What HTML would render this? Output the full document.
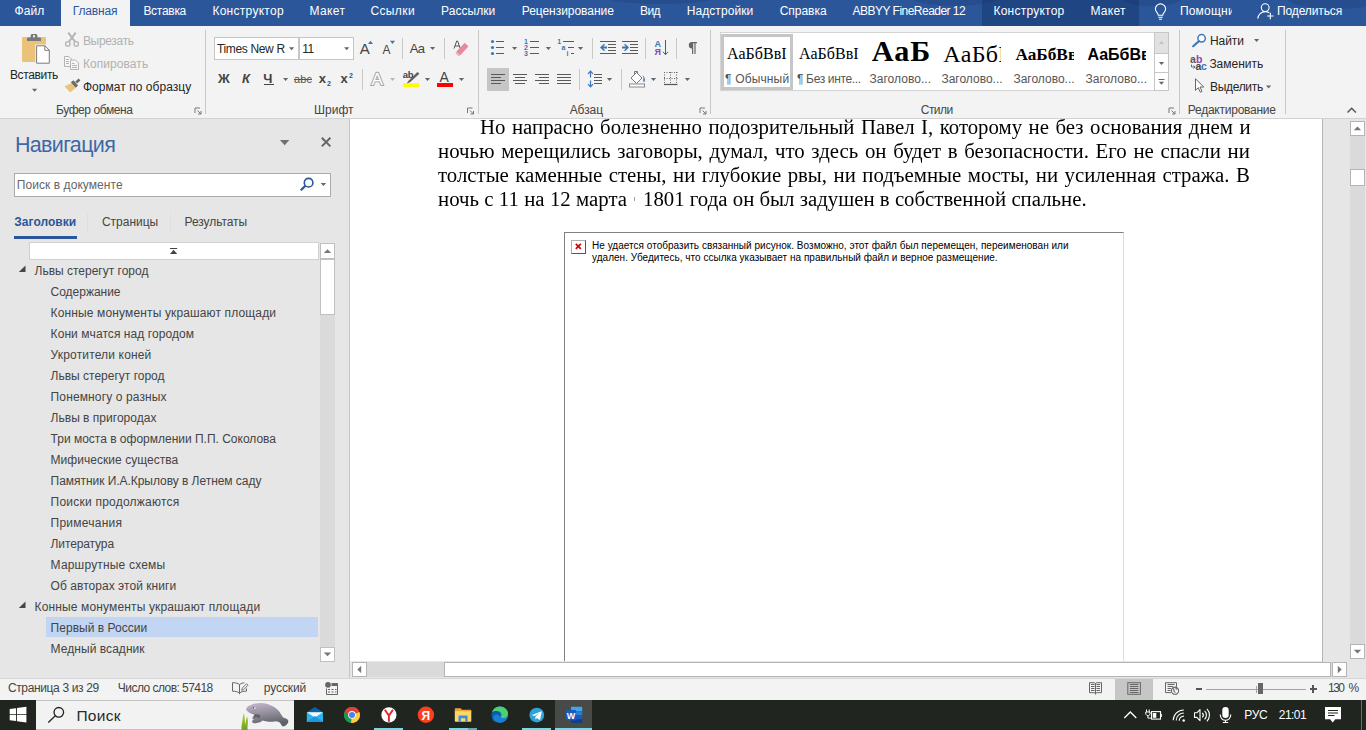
<!DOCTYPE html>
<html lang="ru">
<head>
<meta charset="utf-8">
<title>Документ — Word</title>
<style>
html,body{margin:0;padding:0;}
body{width:1366px;height:730px;overflow:hidden;position:relative;background:#e6e6e6;font-family:"Liberation Sans",sans-serif;font-size:12px;color:#444;}
.abs,.t,.ic{position:absolute;}
.t{white-space:nowrap;line-height:1;}
.ic{left:0;top:0;width:1366px;height:730px;overflow:visible;pointer-events:none;}
section,header,nav,main,footer{position:absolute;left:0;top:0;width:1366px;height:0;}
#tabs .bar{left:0;top:0;width:1366px;height:26px;background:#2b579a;}
#tabs .ctx{left:982px;top:0;width:157px;height:26px;background:#1f4582;}
#tabs .act{left:61px;top:0;width:69px;height:26px;background:#f3f3f3;}
#ribbon .bg{left:0;top:26px;width:1366px;height:92px;background:#f3f3f3;}
#ribbon .bline{left:0;top:118px;width:1366px;height:1px;background:#d2d2d2;}
.vsep{position:absolute;width:1px;background:#c8c8c8;}
.box{position:absolute;background:#fff;border:1px solid #c6c6c6;box-sizing:border-box;}
#nav .bg{left:0;top:119px;width:349px;height:559px;background:#e6e6e6;}
#nav .edge{left:349px;top:119px;width:1px;height:559px;background:#c6c6c6;}
#doc .page{left:350px;top:119px;width:972px;height:542px;background:#fff;overflow:hidden;}
.ln{position:absolute;will-change:transform;left:88.2px;width:811.8px;font-family:"Liberation Serif",serif;font-size:20.8px;line-height:24px;height:24px;color:#000;text-align:justify;text-align-last:justify;white-space:nowrap;}
#status .bg{left:0;top:678px;width:1366px;height:22px;background:#f3f3f3;}
#task .bg{left:0;top:700px;width:1366px;height:30px;background:#21251f;}
</style>
</head>
<body>

<header id="tabs">
  <div class="abs bar"></div>
  <div class="abs ctx"></div>
  <div class="abs act"></div>
  <span class="t" style="left:14.4px;top:5.0px;font-size:12px;color:#fff;letter-spacing:0.128px;">Файл</span>
<span class="t" style="left:72.7px;top:5.0px;font-size:12px;color:#2b579a;letter-spacing:-0.131px;">Главная</span>
<span class="t" style="left:143.4px;top:5.0px;font-size:12px;color:#fff;letter-spacing:-0.285px;">Вставка</span>
<span class="t" style="left:212.4px;top:5.0px;font-size:12px;color:#fff;letter-spacing:0.278px;">Конструктор</span>
<span class="t" style="left:309.4px;top:5.0px;font-size:12px;color:#fff;letter-spacing:0.383px;">Макет</span>
<span class="t" style="left:370.4px;top:5.0px;font-size:12px;color:#fff;letter-spacing:0.390px;">Ссылки</span>
<span class="t" style="left:441.1px;top:5.0px;font-size:12px;color:#fff;letter-spacing:0.049px;">Рассылки</span>
<span class="t" style="left:521.7px;top:5.0px;font-size:12px;color:#fff;letter-spacing:-0.036px;">Рецензирование</span>
<span class="t" style="left:640.1px;top:5.0px;font-size:12px;color:#fff;letter-spacing:-0.609px;">Вид</span>
<span class="t" style="left:686.7px;top:5.0px;font-size:12px;color:#fff;letter-spacing:0.084px;">Надстройки</span>
<span class="t" style="left:779.7px;top:5.0px;font-size:12px;color:#fff;letter-spacing:-0.030px;">Справка</span>
<span class="t" style="left:852.6px;top:5.0px;font-size:12px;color:#fff;letter-spacing:-0.524px;">ABBYY FineReader 12</span>
<span class="t" style="left:993.4px;top:5.0px;font-size:12px;color:#fff;letter-spacing:0.248px;">Конструктор</span>
<span class="t" style="left:1090.4px;top:5.0px;font-size:12px;color:#fff;letter-spacing:0.308px;">Макет</span>
<span class="t" style="left:1179.9px;top:5.0px;font-size:12px;color:#fff;letter-spacing:0.216px;overflow:hidden;width:52px;">Помощник</span>
<span class="t" style="left:1277.0px;top:5.0px;font-size:12px;color:#fff;letter-spacing:-0.118px;">Поделиться</span>
  <svg class="ic" viewBox="0 0 1366 730">
  <g fill="#16336b" opacity=".22">
    <ellipse cx="1335" cy="-2" rx="48" ry="11"/>
    <ellipse cx="1152" cy="-2" rx="30" ry="8"/>
    <ellipse cx="955" cy="-3" rx="45" ry="9"/>
    <ellipse cx="660" cy="-4" rx="60" ry="8"/>
  </g>
  <g fill="none" stroke="#fff" stroke-width="1.1">
    <path d="M1158.3 15.2c0-2.2-2.9-3.3-2.9-6.2a5.1 5.1 0 0 1 10.2 0c0 2.900-2.900 4-2.900 6.200z"/>
    <path d="M1158.300 17.3h4.4M1159 19.2h3"/>
    <circle cx="1265.200" cy="7.6" r="3.900"/>
    <path d="M1257.800 18.6c.3-4 3.400-7 7.400-7 1.600 0 3 .5 4.100 1.300"/>
    <path d="M1270.300 12.800v6.400M1267.100 16h6.400"/>
  </g>
</svg>
</header>

<section id="ribbon">
  <div class="abs bg"></div>
  <div class="abs bline"></div>
    <div class="vsep" style="left:205px;top:30px;height:84px"></div>
  <div class="vsep" style="left:478px;top:30px;height:84px"></div>
  <div class="vsep" style="left:710px;top:30px;height:84px"></div>
  <div class="vsep" style="left:1179px;top:30px;height:84px"></div>
  <div class="vsep" style="left:1285px;top:30px;height:84px"></div>
  <div class="vsep" style="left:402px;top:38px;height:21px"></div>
  <div class="vsep" style="left:444px;top:38px;height:21px"></div>
  <div class="vsep" style="left:362px;top:69px;height:21px"></div>
  <div class="vsep" style="left:592px;top:38px;height:21px"></div>
  <div class="vsep" style="left:645px;top:38px;height:21px"></div>
  <div class="vsep" style="left:676px;top:38px;height:21px"></div>
  <div class="vsep" style="left:579px;top:69px;height:21px"></div>
  <div class="vsep" style="left:621px;top:69px;height:21px"></div>
  <div class="box" style="left:214px;top:37px;width:85px;height:23px"></div>
  <div class="box" style="left:299px;top:37px;width:55px;height:23px"></div>
  <div class="abs" style="left:487px;top:68px;width:22px;height:23px;background:#c6c6c6"></div>
  <div class="box" style="left:720px;top:32px;width:449px;height:59px;border-color:#d4d4d4"></div>
  <div class="abs" style="left:721px;top:34px;width:72px;height:56px;box-sizing:border-box;border:3px solid #c6c6c6"></div>
  <div class="abs" style="left:1154px;top:32px;width:15px;height:59px;box-sizing:border-box;border:1px solid #c6c6c6;background:#fff"></div>
  <div class="abs" style="left:1155px;top:33px;width:13px;height:20px;background:#e1e1e1"></div>
  <div class="abs" style="left:1155px;top:53px;width:13px;height:1px;background:#c6c6c6"></div>
  <div class="abs" style="left:1155px;top:72px;width:13px;height:1px;background:#c6c6c6"></div>
  <div class="abs" style="left:403px;top:83px;width:16px;height:4px;background:#ffff00"></div>
  <div class="abs" style="left:437px;top:83px;width:16px;height:4px;background:#ff0000"></div>
  <div class="abs" style="left:263.5px;top:84px;width:10.5px;height:1px;background:#444"></div>
  <span class="t" style="left:9.9px;top:69.0px;font-size:12px;color:#262626;letter-spacing:-0.354px;">Вставить</span>
<span class="t" style="left:82.9px;top:35.0px;font-size:12px;color:#b1b1b1;letter-spacing:-0.311px;">Вырезать</span>
<span class="t" style="left:82.9px;top:58.0px;font-size:12px;color:#b1b1b1;letter-spacing:0.075px;">Копировать</span>
<span class="t" style="left:82.9px;top:81.0px;font-size:12px;color:#262626;letter-spacing:0.049px;">Формат по образцу</span>
<span class="t" style="left:56.0px;top:104.0px;font-size:12px;color:#444;letter-spacing:-0.422px;">Буфер обмена</span>
<span class="t" style="left:314.1px;top:104.0px;font-size:12px;color:#444;">Шрифт</span>
<span class="t" style="left:569.7px;top:104.0px;font-size:12px;color:#444;letter-spacing:-0.068px;">Абзац</span>
<span class="t" style="left:920.8px;top:104.0px;font-size:12px;color:#444;letter-spacing:-0.545px;">Стили</span>
<span class="t" style="left:1187.8px;top:104.0px;font-size:12px;color:#444;letter-spacing:-0.248px;">Редактирование</span>
<span class="t" style="left:216.9px;top:43.0px;font-size:12px;color:#262626;letter-spacing:-0.336px;">Times New R</span>
<span class="t" style="left:302.2px;top:43.0px;font-size:12px;color:#262626;letter-spacing:-0.469px;">11</span>
<span class="t" style="left:1210.0px;top:35.0px;font-size:12px;color:#262626;letter-spacing:-0.087px;">Найти</span>
<span class="t" style="left:1209.4px;top:58.0px;font-size:12px;color:#262626;letter-spacing:-0.020px;">Заменить</span>
<span class="t" style="left:1210.0px;top:81.0px;font-size:12px;color:#262626;letter-spacing:-0.308px;">Выделить</span>
<span class="t" style="left:218.1px;top:72.0px;font-size:13px;color:#444;font-weight:700;">Ж</span>
<span class="t" style="left:242.0px;top:72.0px;font-size:13px;color:#444;font-weight:700;font-style:italic;">К</span>
<span class="t" style="left:263.2px;top:72.0px;font-size:13px;color:#444;font-weight:700;">Ч</span>
<span class="t" style="left:294.0px;top:73.5px;font-size:11px;color:#555;letter-spacing:0.075px;text-decoration:line-through;">abc</span>
<span class="t" style="left:318.8px;top:72.0px;font-size:13px;color:#444;font-weight:700;">x</span>
<span class="t" style="left:326.9px;top:80.0px;font-size:7px;color:#2b579a;font-weight:700;">2</span>
<span class="t" style="left:340.4px;top:72.0px;font-size:13px;color:#444;font-weight:700;">x</span>
<span class="t" style="left:348.9px;top:72.0px;font-size:7px;color:#2b579a;font-weight:700;">2</span>
<span class="t" style="left:359.8px;top:41.0px;font-size:15px;color:#444;">A</span>
<span class="t" style="left:382.4px;top:44.0px;font-size:12px;color:#444;">A</span>
<span class="t" style="left:409.7px;top:42.0px;font-size:13px;color:#444;letter-spacing:-0.606px;">Aa</span>
<span class="t" style="left:402.7px;top:69.8px;font-size:9.5px;color:#444;font-weight:700;letter-spacing:-0.194px;">ab</span>
<span class="t" style="left:439.4px;top:70.0px;font-size:14px;color:#444;">A</span>
<span class="t" style="left:727.1px;top:45.5px;font-size:16px;color:#000;font-family:'Liberation Serif',serif;letter-spacing:0.029px;">АаБбВвІ</span>
<span class="t" style="left:725.1px;top:73.0px;font-size:12px;color:#555;letter-spacing:0.146px;">¶ Обычный</span>
<span class="t" style="left:799.0px;top:45.5px;font-size:16px;color:#000;font-family:'Liberation Serif',serif;letter-spacing:0.045px;">АаБбВвІ</span>
<span class="t" style="left:797.0px;top:73.0px;font-size:12px;color:#555;letter-spacing:-0.340px;">¶ Без инте...</span>
<span class="t" style="left:871.8px;top:35.9px;font-size:30.2px;color:#000;font-family:'Liberation Serif',serif;font-weight:700;overflow:hidden;width:58.2px;letter-spacing:1px;">АаБб</span>
<span class="t" style="left:869.4px;top:73.0px;font-size:12px;color:#555;letter-spacing:0.053px;">Заголово...</span>
<span class="t" style="left:943.3px;top:42.0px;font-size:24px;color:#000;font-family:'Liberation Serif',serif;overflow:hidden;width:58.2px;letter-spacing:.35px;">АаБбВ</span>
<span class="t" style="left:941.4px;top:73.0px;font-size:12px;color:#555;">Заголово...</span>
<span class="t" style="left:1015.4px;top:45.9px;font-size:17.3px;color:#000;font-family:'Liberation Serif',serif;font-weight:700;overflow:hidden;width:58.6px;">АаБбВв</span>
<span class="t" style="left:1013.4px;top:73.0px;font-size:12px;color:#555;">Заголово...</span>
<span class="t" style="left:1087.4px;top:46.5px;font-size:16px;color:#000;font-weight:700;overflow:hidden;width:58.6px;">АаБбВвГ</span>
<span class="t" style="left:1085.4px;top:73.0px;font-size:12px;color:#555;letter-spacing:0.043px;">Заголово...</span>
<span class="t" style="left:523.9px;top:38.0px;font-size:7px;color:#3b76b8;font-weight:700;">1</span>
<span class="t" style="left:523.9px;top:44.0px;font-size:7px;color:#3b76b8;font-weight:700;">2</span>
<span class="t" style="left:523.9px;top:50.0px;font-size:7px;color:#3b76b8;font-weight:700;">3</span>
<span class="t" style="left:557.2px;top:38.0px;font-size:7px;color:#3b76b8;font-weight:700;">1</span>
<span class="t" style="left:561.4px;top:44.0px;font-size:7px;color:#3b76b8;font-weight:700;">a</span>
<span class="t" style="left:566.4px;top:50.0px;font-size:7px;color:#3b76b8;font-weight:700;">i</span>
<span class="t" style="left:654.4px;top:39.5px;font-size:9px;color:#3b76b8;font-weight:700;">A</span>
<span class="t" style="left:654.4px;top:47.5px;font-size:9px;color:#8e44ad;font-weight:700;">Я</span>
<span class="t" style="left:1190.1px;top:53.8px;font-size:10.5px;color:#555;font-weight:700;">a</span>
<span class="t" style="left:1195.9px;top:53.8px;font-size:10.5px;color:#8e44ad;font-weight:700;">b</span>
<span class="t" style="left:1195.4px;top:60.8px;font-size:10.5px;color:#444;font-weight:700;">a</span>
<span class="t" style="left:1200.9px;top:60.8px;font-size:10.5px;color:#3b76b8;font-weight:700;">c</span>
<span class="t" style="left:371.5px;top:71.0px;font-size:17px;color:#fff;-webkit-text-stroke:2.2px #a9a9a9;paint-order:stroke fill;">A</span>
  <svg class="ic" viewBox="0 0 1366 730">
  <rect x="22" y="37" width="24" height="25" rx="1.3" fill="#ebc27a"/>
  <path d="M27 41.100v-2.700a1 1 0 0 1 1-1h2.600v-1.900a1.500 1.500 0 0 1 1.500-1.500h3.800a1.500 1.500 0 0 1 1.500 1.500v1.900h2.600a1 1 0 0 1 1 1v2.700z" fill="#797979"/>
  <rect x="33" y="35.300" width="2" height="2" fill="#f3f3f3"/>
  <path d="M35.300 44.500h10.500l4.800 4.800v15.200H35.300z" fill="#f3f3f3"/>
  <path d="M36.600 45.800h8.300l4.400 4.400v13H36.600z" fill="#fff" stroke="#7a7a7a" stroke-width="1"/>
  <path d="M44.800 45.800v4.500h4.500" fill="none" stroke="#7a7a7a" stroke-width="1"/>
  <path d="M32.0 88.8h5.2l-2.6 3z" fill="#666"/>
  <g fill="none" stroke="#b4b4b4" stroke-width="1.300"><circle cx="67.800" cy="43.900" r="2.200"/><circle cx="76.200" cy="43.900" r="2.200"/><path d="M68.300 32.600L75.200 42M75.700 32.600L68.800 42" stroke-width="2"/></g>
  <g fill="#f6f6f6" stroke="#b4b4b4" stroke-width="1"><path d="M64.500 56.500h4.500l2.500 2.500v7.500h-7z"/><path d="M70.500 60h5l3 3v6.500h-8z"/></g>
  <g stroke="#b4b4b4" stroke-width="1"><path d="M66 59.500h3M66 61.500h3M66 63.500h3M72 63.500h2.500M72 65.500h5M72 67.500h5"/></g>
  <path d="M64.600 86.200l6.800-3 4.200 4.800-5.400 4.600z" fill="#ebc27a"/>
  <path d="M70.800 82.200l2.700-2 4.600 5.300-2.500 2.300z" fill="#6a6a6a"/>
  <path d="M75.300 81.500l3.400-2.900 1.700 1.900-3.400 2.900z" fill="#6a6a6a"/>
  <path d="M195.0 113.0V108.0H200.0" fill="none" stroke="#777" stroke-width="1"/><path d="M197.5 110.5L201.0 114.0M201.0 111.0V114.0H198.0" fill="none" stroke="#777" stroke-width="1"/>
  <path d="M289.0 47.2h5.2l-2.6 3z" fill="#666"/>
  <path d="M344.1 47.2h5.2l-2.6 3z" fill="#666"/>
  <path d="M368 43.900l2.500-3.100 2.500 3.100z" fill="#3b76b8"/>
  <path d="M390 40.800h5l-2.500 3.100z" fill="#3b76b8"/>
  <path d="M430.0 47.0h5.2l-2.6 3z" fill="#666"/>
  <path d="M454 48.600l2.700-7.600h.9l2.700 7.600M455 46h4.300" fill="none" stroke="#555" stroke-width="1"/>
  <path d="M456.200 51.700l7.900-8.300a1 1 0 0 1 1.400 0l2.400 2.300a1 1 0 0 1 0 1.400l-7.900 8.300z" fill="#e6899b"/>
  <path d="M456.100 51.800l3.900 3.700-1 1-3.900-3.700z" fill="#e6899b" stroke="#f3f3f3" stroke-width=".6"/>
  <path d="M283.0 78.0h5.2l-2.6 3z" fill="#666"/>
  <path d="M390.0 78.0h5.2l-2.6 3z" fill="#b8b8b8"/>
  <path d="M424.9 78.0h5.2l-2.6 3z" fill="#666"/>
  <path d="M458.9 78.0h5.2l-2.6 3z" fill="#666"/>
  <path d="M417.600 72.200l-8.300 8.100-1.900 2.600 2.900-1.200 8.700-8z" fill="#5a5a5a" stroke="#5a5a5a" stroke-width=".6"/>
  <path d="M467.5 113.0V108.0H472.5" fill="none" stroke="#777" stroke-width="1"/><path d="M470 110.5L473.5 114.0M473.5 111.0V114.0H470.5" fill="none" stroke="#777" stroke-width="1"/>
  <circle cx="492.500" cy="41.5" r="1.600" fill="#3b76b8"/>
  <path d="M496 41.5H504" stroke="#5a5a5a" stroke-width="1"/>
  <path d="M530 41.5H539" stroke="#5a5a5a" stroke-width="1"/>
  <circle cx="492.500" cy="47.5" r="1.600" fill="#3b76b8"/>
  <path d="M496 47.5H504" stroke="#5a5a5a" stroke-width="1"/>
  <path d="M530 47.5H539" stroke="#5a5a5a" stroke-width="1"/>
  <circle cx="492.500" cy="53.5" r="1.600" fill="#3b76b8"/>
  <path d="M496 53.5H504" stroke="#5a5a5a" stroke-width="1"/>
  <path d="M530 53.5H539" stroke="#5a5a5a" stroke-width="1"/>
  <path d="M512.0 47.0h5.2l-2.6 3z" fill="#666"/>
  <path d="M545.8 47.0h5.2l-2.6 3z" fill="#666"/>
  <path d="M577.9 47.0h5.2l-2.6 3z" fill="#666"/>
  <path d="M563 41.5H574" stroke="#5a5a5a" stroke-width="1"/>
  <path d="M568 47.5H574" stroke="#5a5a5a" stroke-width="1"/>
  <path d="M571 53.5H574" stroke="#5a5a5a" stroke-width="1"/>
  <path d="M600 41.5H616" stroke="#5a5a5a" stroke-width="1"/>
  <path d="M600 53.5H616" stroke="#5a5a5a" stroke-width="1"/>
  <path d="M608 44.5H616" stroke="#5a5a5a" stroke-width="1"/>
  <path d="M608 47.5H616" stroke="#5a5a5a" stroke-width="1"/>
  <path d="M608 50.5H616" stroke="#5a5a5a" stroke-width="1"/>
  <path d="M622 41.5H638" stroke="#5a5a5a" stroke-width="1"/>
  <path d="M622 53.5H638" stroke="#5a5a5a" stroke-width="1"/>
  <path d="M630 44.5H638" stroke="#5a5a5a" stroke-width="1"/>
  <path d="M630 47.5H638" stroke="#5a5a5a" stroke-width="1"/>
  <path d="M630 50.5H638" stroke="#5a5a5a" stroke-width="1"/>
  <path d="M600 47.500l3.400-3.300h2l-2.300 2.400h3.900v1.800h-3.900l2.300 2.400h-2z" fill="#3b76b8"/>
  <path d="M629 47.500l-3.400-3.300h-2l2.300 2.400h-3.900v1.800h3.900l-2.300 2.400h2z" fill="#3b76b8"/>
  <path d="M665.500 40v14.500M663 51.800l2.500 2.900 2.500-2.900" fill="none" stroke="#5a5a5a" stroke-width="1"/>
  <path d="M692 42h5v1.200h-1.400V54h-1.200V43.200h-1.200V54H692v-5.600a3.200 3.200 0 0 1 0-6.400z" fill="#666"/>
  <path d="M491 74.5H505" stroke="#5a5a5a" stroke-width="1"/>
  <path d="M513 74.5H527" stroke="#5a5a5a" stroke-width="1"/>
  <path d="M535 74.5H549" stroke="#5a5a5a" stroke-width="1"/>
  <path d="M557 74.5H571" stroke="#5a5a5a" stroke-width="1"/>
  <path d="M594 74.5H602" stroke="#5a5a5a" stroke-width="1"/>
  <path d="M491 77.5H501" stroke="#5a5a5a" stroke-width="1"/>
  <path d="M515 77.5H525" stroke="#5a5a5a" stroke-width="1"/>
  <path d="M539 77.5H549" stroke="#5a5a5a" stroke-width="1"/>
  <path d="M557 77.5H571" stroke="#5a5a5a" stroke-width="1"/>
  <path d="M594 77.5H602" stroke="#5a5a5a" stroke-width="1"/>
  <path d="M491 80.5H505" stroke="#5a5a5a" stroke-width="1"/>
  <path d="M513 80.5H527" stroke="#5a5a5a" stroke-width="1"/>
  <path d="M535 80.5H549" stroke="#5a5a5a" stroke-width="1"/>
  <path d="M557 80.5H571" stroke="#5a5a5a" stroke-width="1"/>
  <path d="M594 80.5H602" stroke="#5a5a5a" stroke-width="1"/>
  <path d="M491 83.5H501" stroke="#5a5a5a" stroke-width="1"/>
  <path d="M515 83.5H525" stroke="#5a5a5a" stroke-width="1"/>
  <path d="M539 83.5H549" stroke="#5a5a5a" stroke-width="1"/>
  <path d="M557 83.5H571" stroke="#5a5a5a" stroke-width="1"/>
  <path d="M594 83.5H602" stroke="#5a5a5a" stroke-width="1"/>
  <path d="M590.500 71.300v6.200M588 73.800l2.500-2.700 2.500 2.700M590.500 80.500v6.200M588 84.200l2.500 2.700 2.500-2.700" fill="none" stroke="#3b76b8" stroke-width="1.200"/>
  <path d="M606.9 78.0h5.2l-2.6 3z" fill="#666"/>
  <path d="M650.9 78.0h5.2l-2.6 3z" fill="#666"/>
  <path d="M684.8 78.0h5.2l-2.6 3z" fill="#666"/>
  <path d="M634.500 75.500v-4h3v5" fill="none" stroke="#777" stroke-width="1"/>
  <path d="M631 78l5.500-5.500L642 78l-5.500 5.500z" fill="#fff" stroke="#777" stroke-width="1"/>
  <path d="M642.300 75c2.300 1.500 3.500 4.500 2 7.200-1-.6-1.300-1.700-1-2.700.4-1.500.2-3-1-4.500z" fill="#3b76b8"/>
  <rect x="629.500" y="84" width="15" height="3" fill="#fff" stroke="#8a8a8a" stroke-width="1"/>
  <g stroke="#666" stroke-width="1" stroke-dasharray="1 1.500"><path d="M664 72.500h13.500M664 78.500h13.500M664.500 72v12M670.500 72v12M676.500 72v12"/></g>
  <path d="M664 84.5H677.5" stroke="#555" stroke-width="1.2"/>
  <path d="M700.0 113.0V108.0H705.0" fill="none" stroke="#777" stroke-width="1"/><path d="M702.5 110.5L706.0 114.0M706.0 111.0V114.0H703.0" fill="none" stroke="#777" stroke-width="1"/>
  <path d="M1158.9 44.0h5.2l-2.6 -3z" fill="#c2c2c2"/>
  <path d="M1158.9 62.0h5.2l-2.6 3z" fill="#666"/>
  <path d="M1158.5 79.5H1164.5" stroke="#666" stroke-width="1"/>
  <path d="M1158.9 81.8h5.2l-2.6 3z" fill="#666"/>
  <path d="M1169.0 113.0V108.0H1174.0" fill="none" stroke="#777" stroke-width="1"/><path d="M1171.5 110.5L1175.0 114.0M1175.0 111.0V114.0H1172.0" fill="none" stroke="#777" stroke-width="1"/>
  <circle cx="1201.600" cy="38.300" r="3.700" fill="#fff" stroke="#3b76b8" stroke-width="1.500"/><path d="M1198.800 41.200l-5.600 5" stroke="#3b76b8" stroke-width="2.200" stroke-linecap="round"/>
  <path d="M1254.0 39.0h5.2l-2.6 3z" fill="#666"/>
  <path d="M1191.500 64.500v2.500h3.500M1193.500 65.500l1.700 1.500-1.700 1.500" fill="none" stroke="#3b76b8" stroke-width="1"/>
  <path d="M1195.500 78.800v11.500l2.800-2.600 2 4.500 1.700-.8-2-4.400h3.800z" fill="#fff" stroke="#666" stroke-width="1" stroke-linejoin="miter"/>
  <path d="M1266.0 85.5h5.2l-2.6 3z" fill="#666"/>
  <path d="M1347.500 112.500l4.200-4.200 4.200 4.200" fill="none" stroke="#555" stroke-width="1.500"/>
</svg>
</section>

<nav id="nav">
  <div class="abs bg"></div>
  <div class="abs edge"></div>
    <div class="box" style="left:14px;top:173px;width:317px;height:24px;border-color:#ababab"></div>
  <div class="abs" style="left:14px;top:236px;width:63px;height:3px;background:#2b579a"></div>
  <div class="abs" style="left:87px;top:212px;width:1px;height:20px;background:#e0e0e0"></div>
  <div class="abs" style="left:170px;top:212px;width:1px;height:20px;background:#e0e0e0"></div>
  <div class="box" style="left:29px;top:242px;width:290px;height:18px;border-color:#d0d0d0"></div>
  <div class="abs" style="left:320px;top:243px;width:15px;height:419px;background:#dadada"></div>
  <div class="box" style="left:320px;top:243px;width:15px;height:16px;border-color:#c0c0c0"></div>
  <div class="box" style="left:320px;top:259px;width:15px;height:56px;border-color:#c0c0c0"></div>
  <div class="box" style="left:320px;top:647px;width:15px;height:15px;border-color:#c0c0c0"></div>
  <div class="abs" style="left:46px;top:617px;width:272px;height:20px;background:#c2d5f2"></div>
  <span class="t" style="left:14.9px;top:135.2px;font-size:21.5px;color:#3f68a6;letter-spacing:-0.665px;">Навигация</span>
<span class="t" style="left:16.8px;top:179.0px;font-size:12px;color:#666;letter-spacing:0.062px;">Поиск в документе</span>
<span class="t" style="left:14.3px;top:216.0px;font-size:12px;color:#2b579a;font-weight:700;letter-spacing:0.034px;">Заголовки</span>
<span class="t" style="left:101.9px;top:216.0px;font-size:12px;color:#444;letter-spacing:-0.006px;">Страницы</span>
<span class="t" style="left:184.6px;top:216.0px;font-size:12px;color:#444;letter-spacing:-0.078px;">Результаты</span>
<span class="t" style="left:34.5px;top:265.0px;font-size:12px;color:#444;">Львы стерегут город</span>
<span class="t" style="left:50.6px;top:286.0px;font-size:12px;color:#444;letter-spacing:-0.027px;">Содержание</span>
<span class="t" style="left:50.6px;top:307.0px;font-size:12px;color:#444;letter-spacing:0.137px;">Конные монументы украшают площади</span>
<span class="t" style="left:50.6px;top:328.0px;font-size:12px;color:#444;letter-spacing:0.069px;">Кони мчатся над городом</span>
<span class="t" style="left:50.6px;top:349.0px;font-size:12px;color:#444;letter-spacing:0.156px;">Укротители коней</span>
<span class="t" style="left:50.6px;top:370.0px;font-size:12px;color:#444;">Львы стерегут город</span>
<span class="t" style="left:50.6px;top:391.0px;font-size:12px;color:#444;letter-spacing:0.127px;">Понемногу о разных</span>
<span class="t" style="left:50.6px;top:412.0px;font-size:12px;color:#444;letter-spacing:0.013px;">Львы в пригородах</span>
<span class="t" style="left:50.6px;top:433.0px;font-size:12px;color:#444;letter-spacing:-0.008px;">Три моста в оформлении П.П. Соколова</span>
<span class="t" style="left:50.6px;top:454.0px;font-size:12px;color:#444;letter-spacing:0.034px;">Мифические существа</span>
<span class="t" style="left:50.6px;top:475.0px;font-size:12px;color:#444;letter-spacing:-0.043px;">Памятник И.А.Крылову в Летнем саду</span>
<span class="t" style="left:50.6px;top:496.0px;font-size:12px;color:#444;letter-spacing:0.223px;">Поиски продолжаются</span>
<span class="t" style="left:50.6px;top:517.0px;font-size:12px;color:#444;letter-spacing:0.235px;">Примечания</span>
<span class="t" style="left:50.6px;top:538.0px;font-size:12px;color:#444;letter-spacing:-0.116px;">Литература</span>
<span class="t" style="left:50.6px;top:559.0px;font-size:12px;color:#444;letter-spacing:0.178px;">Маршрутные схемы</span>
<span class="t" style="left:50.6px;top:580.0px;font-size:12px;color:#444;letter-spacing:0.043px;">Об авторах этой книги</span>
<span class="t" style="left:34.5px;top:601.0px;font-size:12px;color:#444;letter-spacing:0.144px;">Конные монументы украшают площади</span>
<span class="t" style="left:50.6px;top:622.0px;font-size:12px;color:#444;letter-spacing:0.023px;">Первый в России</span>
<span class="t" style="left:50.6px;top:643.0px;font-size:12px;color:#444;letter-spacing:0.052px;">Медный всадник</span>
  <svg class="ic" viewBox="0 0 1366 730">
  <path d="M280 140h9.300l-4.650 5.200z" fill="#707070"/>
  <path d="M321.800 137.800l8.600 8.600M330.400 137.800l-8.600 8.600" stroke="#666" stroke-width="2"/>
  <circle cx="308.600" cy="182.700" r="4.300" fill="none" stroke="#2b579a" stroke-width="1.600"/><path d="M305.400 185.800l-4.600 4.500" stroke="#2b579a" stroke-width="2.200"/>
  <path d="M320.7 183.0h5.4l-2.7 3z" fill="#666"/>
  <path d="M170 248.500h7.200" stroke="#444" stroke-width="1"/><path d="M170 254l3.600-4.300 3.600 4.300z" fill="#444"/>
  <path d="M323.800 252.900l3.700-3.700 3.700 3.700z" fill="#777"/>
  <path d="M323.800 652.600h7.400l-3.700 3.700z" fill="#777"/>
  <path d="M18.800 272h6.700v-6.500z" fill="#444"/>
  <path d="M18.800 608h6.700v-6.500z" fill="#444"/>
</svg>
</nav>

<main id="doc">
  <div class="abs page">
    <div class="ln" style="top:-4.2px;left:129.6px;width:770.6px">Но напрасно болезненно подозрительный Павел I, которому не без основания днем и</div>
    <div class="ln" style="top:19.7px">ночью мерещились заговоры, думал, что здесь он будет в безопасности. Его не спасли ни</div>
    <div class="ln" style="top:43.6px">толстые каменные стены, ни глубокие рвы, ни подъемные мосты, ни усиленная стража. В</div>
    <div class="ln" style="top:67.6px;width:189px">ночь с 11 на 12 марта</div>
    <div class="ln" style="top:67.6px;left:293.2px;width:443.6px">1801 года он был задушен в собственной спальне.</div>
    <div class="abs" style="left:284px;top:78px;width:1px;height:4px;background:#9aa0a8"></div>
    <div class="abs" style="left:214px;top:113px;width:560px;height:440px;box-sizing:border-box;border-left:1px solid #808080;border-top:1px solid #808080;border-right:1px solid #dcdcdc;"></div>
    <div class="abs" style="left:221px;top:120.5px;width:14.5px;height:14.5px;box-sizing:border-box;border:1px solid #b0b0b0;border-right-color:#555;border-bottom-color:#555;background:#fff"></div>
    <span class="t" style="left:242.0px;top:121.5px;font-size:10px;color:#000;letter-spacing:0.024px;">Не удается отобразить связанный рисунок. Возможно, этот файл был перемещен, переименован или</span>
<span class="t" style="left:242.0px;top:133.5px;font-size:10px;color:#000;letter-spacing:0.025px;">удален. Убедитесь, что ссылка указывает на правильный файл и верное размещение.</span>
    <svg class="abs" style="left:221px;top:120px" width="15" height="15" viewBox="0 0 15 15"><path d="M4.800 4.800l5 5M9.800 4.800l-5 5" stroke="#e00000" stroke-width="1.800"/></svg>
  </div>
  <div class="abs" style="left:1322px;top:119px;width:1px;height:543px;background:#b4b4b4"></div>
  <div class="abs" style="left:1350px;top:121px;width:15px;height:538px;background:#dadada"></div>
  <div class="box" style="left:1350px;top:121px;width:15px;height:15px;border-color:#b4b4b4"></div>
  <div class="box" style="left:1350px;top:169px;width:15px;height:17px;border-color:#b4b4b4"></div>
  <div class="box" style="left:1350px;top:644px;width:15px;height:15px;border-color:#b4b4b4"></div>
  <div class="abs" style="left:352px;top:662px;width:995px;height:15px;background:#dadada"></div>
  <div class="box" style="left:352px;top:662px;width:15px;height:15px;border-color:#b4b4b4"></div>
  <div class="box" style="left:444px;top:662px;width:887px;height:15px;border-color:#b4b4b4"></div>
  <div class="box" style="left:1332px;top:662px;width:15px;height:15px;border-color:#b4b4b4"></div>
  <svg class="ic" viewBox="0 0 1366 730">
  <path d="M1353.800 130.300l3.700-3.700 3.700 3.700z" fill="#777"/>
  <path d="M1353.800 649.800h7.400l-3.700 3.700z" fill="#777"/>
  <path d="M361.200 665.800v7.400l-3.900-3.700z" fill="#777"/>
  <path d="M1337.800 665.800v7.400l3.900-3.700z" fill="#777"/>
</svg>
</main>

<footer id="status">
  <div class="abs bg"></div>
    <div class="abs" style="left:0;top:678px;width:1366px;height:1px;background:#d6d6d6"></div>
  <div class="abs" style="left:1115px;top:679px;width:38px;height:21px;background:#c6c6c6"></div>
  <div class="abs" style="left:1206px;top:689px;width:100px;height:1px;background:#a3a3a3"></div>
  <div class="abs" style="left:1256px;top:686px;width:1px;height:7px;background:#a3a3a3"></div>
  <div class="abs" style="left:1258px;top:683px;width:5px;height:11px;background:#666"></div>
  <div class="abs" style="left:1196px;top:688px;width:6px;height:2px;background:#555"></div>
  <div class="abs" style="left:1309.5px;top:688.2px;width:7.5px;height:1.6px;background:#555"></div>
  <div class="abs" style="left:1312.4px;top:685.2px;width:1.6px;height:7.6px;background:#555"></div>
  <span class="t" style="left:7.9px;top:682.0px;font-size:12px;color:#444;letter-spacing:-0.355px;">Страница 3 из 29</span>
<span class="t" style="left:117.8px;top:682.0px;font-size:12px;color:#444;letter-spacing:-0.536px;">Число слов: 57418</span>
<span class="t" style="left:263.8px;top:682.0px;font-size:12px;color:#444;letter-spacing:-0.094px;">русский</span>
<span class="t" style="left:1328.1px;top:682.0px;font-size:12px;color:#444;letter-spacing:-1.566px;">130</span>
<span class="t" style="left:1348.4px;top:682.0px;font-size:12px;color:#444;">%</span>
  <svg class="ic" viewBox="0 0 1366 730">
  <path d="M239.500 684.500v8.300M239.500 684.500c-1.800-1.500-4.500-1.800-7-1.800v8.500c2.500 0 5.200.3 7 1.800l0 1.200M239.500 684.500c1.300-1 3-1.600 4.800-1.700M246.500 688.500v2.700c-2.500 0-5.200.3-7 1.800" fill="none" stroke="#666" stroke-width="1"/>
  <path d="M241.700 690.300l.6-2.200 4.200-4.400 1.500 1.500-4.200 4.400z" fill="#f3f3f3" stroke="#666" stroke-width=".9"/>
  <circle cx="328" cy="684.800" r="2.900" fill="#666"/>
  <path d="M331.500 683.500h6v11h-11v-6" fill="none" stroke="#666" stroke-width="1"/><path d="M331.500 683.500h6v2.500h-6z" fill="#666"/>
  <path d="M328 689.500h2M331.500 689.500h2M335 689.500h1.500M328 692h2M331.500 692h2M335 692h1.500" stroke="#666" stroke-width="1.200"/>
  <path d="M1095.500 684v10.500M1089.500 682.700h4.500c.800 0 1.500.600 1.500 1.300c0-.700.700-1.300 1.500-1.300h4.500v10h-4.500c-.800 0-1.500.600-1.500 1.300c0-.700-.700-1.300-1.500-1.300h-4.500z" fill="none" stroke="#666" stroke-width="1"/>
  <path d="M1091 684.500h3.500M1091 686.500h3.500M1091 688.500h3.500M1091 690.500h3.500M1096.500 684.500h3.500M1096.500 686.500h3.500M1096.500 688.500h3.500M1096.500 690.500h3.500" stroke="#666" stroke-width="1"/>
  <rect x="1127.800" y="682.700" width="12.600" height="11.600" fill="none" stroke="#666" stroke-width="1"/>
  <path d="M1129.800 685h8.600M1129.800 687h8.600M1129.800 689h8.600M1129.800 691h8.600M1129.800 693h8.600" stroke="#666" stroke-width="1" transform="translate(0,-.5)"/>
  <path d="M1171 692.600h-5.500v-9.900h11v4" fill="none" stroke="#666" stroke-width="1"/><path d="M1167.500 684.500h7M1167.500 686.500h5.500M1167.500 688.500h3.500M1167.500 690.500h3" stroke="#666" stroke-width="1"/>
  <circle cx="1175" cy="690.700" r="3.600" fill="#f3f3f3" stroke="#666" stroke-width="1.100"/><path d="M1172.700 688.500c1 .2 1.500 1 1.200 2-.2.800.5 1.500 1.500 2M1176 687.500c-.3 1 .3 1.700 1.300 1.800" fill="none" stroke="#666" stroke-width="1.200"/>
</svg>
</footer>

<footer id="task">
  <div class="abs bg"></div>
    <div class="abs" style="left:36px;top:700px;width:258px;height:30px;box-sizing:border-box;background:#f2f2f2;border-top:1px solid #c4c4c4;border-bottom:1px solid #c4c4c4"></div>
  <div class="abs" style="left:555px;top:700px;width:37px;height:30px;background:#484a47"></div>
  <div class="abs" style="left:374px;top:728px;width:29px;height:2px;background:#76d9e6"></div>
  <div class="abs" style="left:449px;top:728px;width:19px;height:2px;background:#76d9e6"></div>
  <div class="abs" style="left:468px;top:728px;width:9px;height:2px;background:#5fa9b1"></div>
  <div class="abs" style="left:522px;top:728px;width:29px;height:2px;background:#76d9e6"></div>
  <div class="abs" style="left:555px;top:728px;width:37px;height:2px;background:#76d9e6"></div>
  <span class="t" style="left:76.4px;top:707.8px;font-size:15.5px;color:#2b2b2b;letter-spacing:0.312px;">Поиск</span>
<span class="t" style="left:1244.2px;top:709.0px;font-size:12px;color:#fff;letter-spacing:-0.266px;">РУС</span>
<span class="t" style="left:1278.8px;top:709.0px;font-size:12px;color:#fff;letter-spacing:-0.558px;">21:01</span>
  <svg class="ic" viewBox="0 0 1366 730">
  <path d="M9.700 709.100l6.400-.9v6h-6.400zM17 708.100l9.400-1.300v7.400H17zM9.700 715.100h6.400v6l-6.400-.9zM17 715.100h9.400v7.500L17 721.300z" fill="#fff"/>
  <circle cx="58.800" cy="712.300" r="4.800" fill="none" stroke="#222" stroke-width="1.300"/><path d="M55.300 715.800l-7 6.700" stroke="#222" stroke-width="1.300"/>
  <defs><linearGradient id="gw" x1="0" y1="0" x2="0" y2="1"><stop offset="0" stop-color="#b9d63a"/><stop offset="1" stop-color="#6f9e22"/></linearGradient><linearGradient id="gm" x1="0" y1="0" x2="0.25" y2="1"><stop offset="0" stop-color="#c6bace"/><stop offset=".45" stop-color="#9a93a3"/><stop offset="1" stop-color="#5e6266"/></linearGradient></defs>
  <path d="M241.600 730c-.300-3.500.300-6.500.800-9.500.400-2.600.500-5 1.300-7.300.900 2 1.200 4.300 1.100 6.700.200 1.700.500 3.300.400 5 .500-2.800.800-5.800 2-8.400.900 2.600.900 5.400.500 8.100-.200 1.900-.300 3.700-.100 5.400z" fill="url(#gw)"/>
  <path d="M246.200 709.600C246 707.500 248.200 705.800 250.500 705.200C253.500 703.600 257 703 260.600 703C265.500 703 270 704.600 273.300 706.600C277 708.800 279.500 711.500 281 714.200C281.800 715.800 282.600 717 283.600 717.800C285 718.300 286.800 718.600 287.800 719.800C288.600 721 288.400 722.500 287.600 723.600C286.600 725 285 726.400 283.200 726.500C281.800 726 281 724.500 280.200 723C279.300 721.900 277.500 721.300 275.500 721.200C273 721.600 271 721.800 268.900 721.700C266.500 721.600 264.300 721.200 262.400 720.600C261.500 721.800 259 723 255.500 723.300C253.500 723.400 252 722.600 252 721.500C252.200 720.600 253.200 720.200 254.200 719.600C253 719.600 252.200 718.900 252.400 718C252.800 716.600 254 715.300 254.500 714.600C252.500 714.200 250.500 713.500 249 712.400C247.500 711.500 246.400 710.600 246.200 709.600Z" fill="url(#gm)"/>
  <path d="M252.500 713.400c2 .600 4.500 1 6.500 1.200 1 .800 1.400 2 1 3.200-1.200.300-2.600 0-3.400-.800-.900.600-2.100.800-3.100.500.300-1.400 1-2.500 1.500-3.100-1.300-.200-2.300-.500-3-1z" fill="#55565c" opacity=".75"/>
  <circle cx="254.600" cy="708" r="1" fill="#f4eef4"/><circle cx="253.700" cy="707.700" r=".7" fill="#5a3040"/>
  <path d="M306.800 712.300l8.100-5.300 8.100 5.300z" fill="#0f5ea8"/><path d="M306.800 712.300h16.200v9.700h-16.200z" fill="#2bb3ee"/><path d="M306.800 712.300l8.100 5.200 8.100-5.200z" fill="#f2f6f9"/><path d="M306.800 722l8.100-6 8.100 6z" fill="#1e95dd"/>
  <circle cx="352" cy="714.900" r="8" fill="#db4437"/><path d="M352 714.900L345.100 710.900A8 8 0 0 0 351 722.850z" fill="#0f9d58"/><path d="M352 714.900L351 722.850A8 8 0 0 0 359.400 711.900z" fill="#ffcd40"/><path d="M352 711.200h7.100a8 8 0 0 0-14-0.300l3.600 6z" fill="#db4437"/><circle cx="352" cy="714.900" r="3.800" fill="#fff"/><circle cx="352" cy="714.900" r="3" fill="#4285f4"/>
  <circle cx="388.900" cy="714.900" r="7.600" fill="#fff"/><path d="M384.800 709.800l4.100 5.700 4.100-5.700M388.900 715.500v6.300" fill="none" stroke="#e8202a" stroke-width="1.900"/>
  <circle cx="425.900" cy="714.800" r="8.200" fill="#fc3f1d"/>
  <path d="M454.800 709.200c0-.6.400-1 1-1h4.800l1.400 1.500h8.300c.6 0 1 .4 1 1v1.500h-16.500z" fill="#e9a53a"/><path d="M454.800 711.200h16.500v9.500c0 .6-.4 1-1 1h-14.500c-.6 0-1-.4-1-1z" fill="#ffd766"/><path d="M458.500 721.700v-5.400c0-.5.400-.9.900-.9h7.300c.5 0 .9.400.9.900v5.400h-2.400v-3.400h-4.300v3.400z" fill="#3b8fdd"/>
  <circle cx="499.900" cy="714.800" r="8.200" fill="#1b7fd6"/><path d="M492 712.500c1-4 4.500-6 8-6 4.500 0 8.100 3.300 8.100 7.300 0 2.500-2 4.200-4.300 4.200-1.500 0-2.600-.5-3-1.300 1-1 1.200-2.300.6-3.400-.8-1.500-2.600-2.300-4.600-2.100-2 .2-3.800 1-4.800 1.300z" fill="#4bd16f"/><path d="M492 712.500c2-2 6.500-2 8.200.3.900 1.200.8 2.700-.2 3.900-1.400-2.600-5-3-6.400-.6-1.300 2.300.3 5.700 3.400 6.800-3.600-.6-6.400-4.500-5-10.400z" fill="#0c5ba5"/>
  <circle cx="536.800" cy="715.100" r="7.400" fill="#2fa3d8"/><path d="M532 715l9-3.600c.5-.2.900.1.700.8l-1.500 7.100c-.1.500-.5.700-.9.400l-2.300-1.700-1.200 1.100c-.2.200-.5.100-.5-.2l.2-2.300 4.200-3.800-5.200 3.200-2.400-.7c-.5-.1-.5-.1-.1-.3z" fill="#fff"/>
  <path d="M571 706.800h10.200c.6 0 1 .4 1 1v3.500h-11.200z" fill="#41a5ee"/><path d="M571 711.300h11.200v4h-11.200z" fill="#2b7cd3"/><path d="M571 715.300h11.200v4h-11.200z" fill="#185abd"/><path d="M571 719.300h11.200v2.600c0 .6-.4 1-1 1h-10.200z" fill="#103f91"/><rect x="565.800" y="709.900" width="10.300" height="10.300" rx="1" fill="#185abd"/>
  <path d="M1124.300 718l6-6 6 6" fill="none" stroke="#fff" stroke-width="1.300"/>
  <rect x="1151.500" y="711.600" width="9" height="7.500" fill="none" stroke="#fff" stroke-width="1.100"/><rect x="1160.500" y="713.800" width="1.300" height="3.200" fill="#fff"/><rect x="1152.800" y="713" width="3.500" height="4.800" fill="#fff"/><path d="M1146.500 709.500v2.500M1149.200 709.500v2.500M1145.800 712h4.200v2.300l-1.300 1.300h-1.600l-1.300-1.300zM1147.900 715.600v2.500h3" fill="none" stroke="#fff" stroke-width="1"/>
  <g fill="none" stroke="#fff" stroke-width="1.100"><path d="M1173.200 720.200a10.600 10.600 0 0 1 10.600-10.200" /><path d="M1176.200 720.600a7.700 7.700 0 0 1 7.700-7.600" opacity=".95"/><path d="M1179.200 720.800a4.700 4.700 0 0 1 4.700-4.700"/></g><circle cx="1183.700" cy="720.500" r="1.200" fill="#fff"/>
  <path d="M1194.500 712.800h2.300l3.200-3.200v11l-3.200-3.200h-2.300z" fill="none" stroke="#fff" stroke-width="1.100" stroke-linejoin="round"/><g fill="none" stroke="#fff" stroke-width="1.100"><path d="M1202.300 712.800a3.300 3.300 0 0 1 0 4.600"/><path d="M1204.600 710.800a6 6 0 0 1 0 8.600"/><path d="M1206.900 708.900a8.800 8.800 0 0 1 0 12.400"/></g>
  <rect x="1222.300" y="707" width="6.400" height="11" rx="3.200" fill="#fff"/><path d="M1220.300 714.500v.6a5.200 5.200 0 0 0 10.400 0v-.6M1225.500 720.300v2M1222.800 722.500h5.400" fill="none" stroke="#fff" stroke-width="1.100"/>
  <path d="M1325 707h16v12.200h-5.700l-2.600 3.300-2.600-3.300H1325z" fill="#fff"/><path d="M1328 710.500h10M1328 713h10M1328 715.500h6.500" stroke="#21251f" stroke-width="1.100"/>
  <path d="M1361.500 700v30" stroke="#6a6a6a" stroke-width="1"/>
</svg>
  <span class="t" style="left:421.6px;top:710.0px;font-size:12px;color:#fff;font-weight:700;">Я</span>
<span class="t" style="left:566.7px;top:711.5px;font-size:9px;color:#fff;font-weight:700;">W</span>
</footer>

</body>
</html>
